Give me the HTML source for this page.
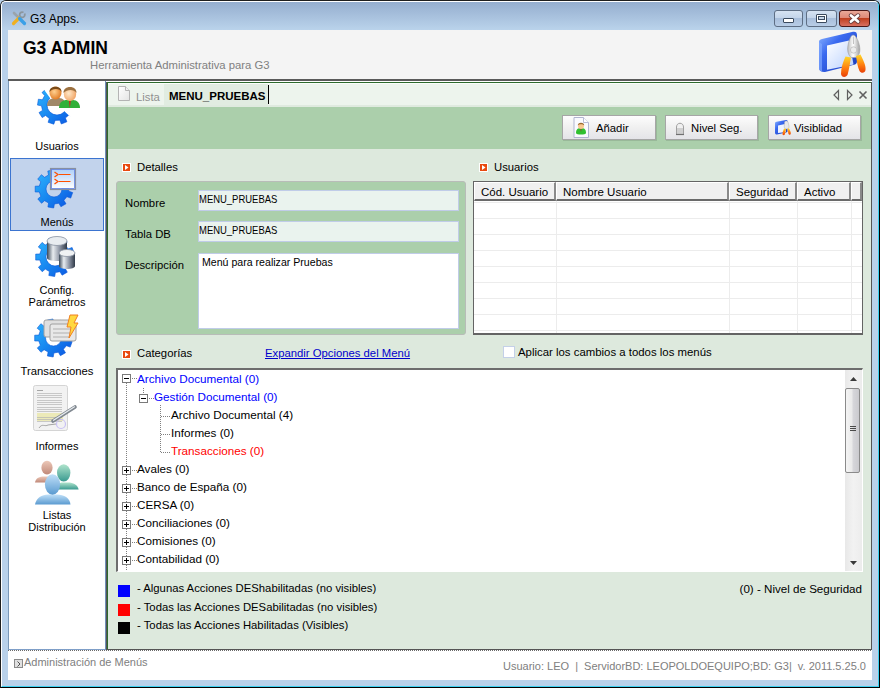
<!DOCTYPE html>
<html><head><meta charset="utf-8">
<style>
*{margin:0;padding:0;box-sizing:border-box}
html,body{width:880px;height:688px;overflow:hidden}
body{position:relative;background:#b9d1ea;font-family:"Liberation Sans",sans-serif;font-size:11px;color:#000}
.a{position:absolute}
.t{position:absolute;white-space:nowrap;line-height:13px;font-size:11.3px}
.sb{font-size:11px}
</style></head><body>
<!-- frame -->
<div class="a" style="left:0;top:0;width:880px;height:688px;border-top:1px solid #1e1e1e;border-left:1px solid #1e1e1e;border-right:1px solid #000;border-bottom:1px solid #000;border-radius:6px 6px 0 0"></div>
<div class="a" style="left:1px;top:1px;width:878px;height:686px;border-top:1px solid #fff;border-left:1px solid #fff;border-right:1px solid #3cd0f0;border-bottom:1px solid #3cd0f0;border-radius:5px 5px 0 0"></div>
<div class="a" style="left:2px;top:2px;width:876px;height:28px;background:linear-gradient(#95aecf,#bad3eb);border-radius:4px 4px 0 0"></div>

<!-- client -->
<div class="a" style="left:8px;top:30px;width:864px;height:650px;background:#fff"></div>
<div class="a" style="left:8px;top:30px;width:864px;height:49px;background:#f4f4f4"></div>
<div class="a" style="left:8px;top:79px;width:864px;height:2px;background:#5a5a5a"></div>


<!-- title -->
<svg class="a" style="left:11px;top:10px" width="16" height="16" viewBox="0 0 16 16">
 <path d="M3 3 L13 13" stroke="#9aa4ac" stroke-width="2.6" stroke-linecap="round"/>
 <path d="M12.5 2.5 a2.6 2.6 0 1 0 1 1" fill="none" stroke="#8c969e" stroke-width="1.8"/>
 <path d="M2.5 13.5 L8 8" stroke="#f0b020" stroke-width="3.2" stroke-linecap="round"/>
 <path d="M8.5 8.5 L13.5 13.5" stroke="#3aa0e8" stroke-width="3.2" stroke-linecap="round"/>
</svg>
<div class="t" style="left:30px;top:13px;font-size:12px;color:#000">G3 Apps.</div>
<div class="a" style="left:774px;top:10px;width:29px;height:17px;border:1px solid #5e6e84;border-radius:3px;background:linear-gradient(#d6e3f2 0,#c4d5ea 45%,#a9bfdc 50%,#b8cde6 100%)"></div>
<div class="a" style="left:783px;top:18px;width:11px;height:5px;border:1px solid #3a4a5e;border-radius:1px;background:#fff"></div>
<div class="a" style="left:806px;top:10px;width:31px;height:17px;border:1px solid #5e6e84;border-radius:3px;background:linear-gradient(#d6e3f2 0,#c4d5ea 45%,#a9bfdc 50%,#b8cde6 100%)"></div>
<div class="a" style="left:816px;top:14px;width:11px;height:9px;border:1px solid #3a4a5e;border-radius:1px;background:#fff"></div>
<div class="a" style="left:818px;top:16px;width:7px;height:4px;border:1px solid #3a4a5e;background:#c8d8ea"></div>
<div class="a" style="left:839px;top:10px;width:31px;height:17px;border:1px solid #4a1818;border-radius:3px;background:linear-gradient(#eaa898 0,#e08a78 45%,#c04020 50%,#d87060 100%)"></div>
<svg class="a" style="left:847px;top:13px" width="15" height="11" viewBox="0 0 15 11">
 <path d="M4 2.5 L11 8.5 M11 2.5 L4 8.5" stroke="#6a4040" stroke-width="4.4" stroke-linecap="round"/>
 <path d="M4 2.5 L11 8.5 M11 2.5 L4 8.5" stroke="#fff" stroke-width="2.8" stroke-linecap="round"/>
</svg>

<!-- header -->
<div class="t" style="left:23px;top:39px;font-size:17.5px;font-weight:bold;line-height:18px">G3 ADMIN</div>
<div class="t" style="left:90px;top:59px;color:#808080">Herramienta Administrativa para G3</div>


<svg class="a" style="left:816px;top:30px" width="56" height="49" viewBox="0 0 56 49">
 <defs>
  <linearGradient id="lw" x1="0" y1="0" x2="1" y2="1"><stop offset="0" stop-color="#90b8ff"/><stop offset="0.35" stop-color="#3a6af0"/><stop offset="1" stop-color="#1838b8"/></linearGradient>
  <linearGradient id="lp" x1="0" y1="0" x2="1" y2="1"><stop offset="0" stop-color="#ffffff"/><stop offset="1" stop-color="#b8d0ff"/></linearGradient>
  <linearGradient id="lh" x1="0" y1="0" x2="0" y2="1"><stop offset="0" stop-color="#ffd828"/><stop offset="0.55" stop-color="#ff8010"/><stop offset="1" stop-color="#e84008"/></linearGradient>
  <linearGradient id="lm" x1="0" y1="0" x2="1" y2="0"><stop offset="0" stop-color="#b8b8b8"/><stop offset="0.45" stop-color="#ffffff"/><stop offset="1" stop-color="#a0a0a0"/></linearGradient>
 </defs>
 <path d="M3 12 C3 10 4 9.5 6 9 L37 1.8 C39.5 1.3 41 2.5 41 5 L41 31 C41 33 40.5 34 38 34.8 L10 41.8 C6 42.5 3 41 3 38 Z" fill="url(#lw)"/>
 <path d="M3 12 L3 38 C3 40 4 41 6 41.5 L6 14 Z" fill="#80a8ff" opacity="0.7"/>
 <path d="M11 15.5 L33 10.5 L37.5 34.5 L11 39.8 Z" fill="url(#lp)"/>
 <path d="M36 5.5 C35 6 33.5 9 32.5 13 C31.5 17 31 21 33 25 L35 27.5 L40.5 27.5 C43.5 25 44.5 21 43.5 16 C42.5 11 40.5 7 38.5 5.5 C37.8 5 36.8 5 36 5.5 Z" fill="url(#lm)" stroke="#a0a0a0" stroke-width="0.6"/>
 <path d="M37.3 6.5 L37.5 14" stroke="#b0b0b0" stroke-width="0.8"/>
 <circle cx="37.6" cy="20" r="3.2" fill="#ececec" stroke="#b8b8b8" stroke-width="0.7"/>
 <path d="M29.5 26.5 L35 27.5 C34 33 33 40 31.5 45 C29.5 48 25.5 47.5 25 44 C25 38 27 32 29.5 26.5 Z" fill="url(#lh)"/>
 <path d="M40 26 L44.5 24.5 C47 30 50 35 49.5 40 C49 43.5 45 43.5 43.5 41 C41.5 37 41 32 40 26 Z" fill="url(#lh)"/>
</svg>

<!-- sidebar -->
<div class="a" style="left:8px;top:81px;width:98px;height:569px;border-left:1px solid #7a98b8;border-right:1px solid #7090b8;border-bottom:1px solid #7f9fc8;background:#fff"></div>


<!-- sidebar items -->
<div class="a" style="left:10px;top:158px;width:94px;height:73px;background:#c2d3ec;border:1px solid #3b74d0"></div>

<svg class="a" style="left:30px;top:84px" width="52" height="46" viewBox="0 0 52 46">
 <defs>
  <linearGradient id="gb" x1="0" y1="0" x2="1" y2="1"><stop offset="0" stop-color="#30b8ff"/><stop offset="0.5" stop-color="#1888f0"/><stop offset="1" stop-color="#0a50e0"/></linearGradient>
  <clipPath id="c1"><path d="M0 0 L10 0 L20 14 L46 38 L46 46 L0 46 Z"/></clipPath>
  <radialGradient id="face" cx="0.4" cy="0.4" r="0.65"><stop offset="0" stop-color="#ffd090"/><stop offset="1" stop-color="#e07820"/></radialGradient>
  <radialGradient id="face2" cx="0.4" cy="0.45" r="0.65"><stop offset="0" stop-color="#ffe8c8"/><stop offset="1" stop-color="#f0a060"/></radialGradient>
 </defs>
 <g clip-path="url(#c1)"><path fill="url(#gb)" stroke="#0a58d8" stroke-width="0.6" fill-rule="evenodd" d="M41.8 25.6 L45.4 27.5 L42.5 32.8 L38.9 30.9 L35.4 34.0 L36.9 37.8 L31.3 40.0 L29.8 36.2 L25.1 36.4 L23.8 40.2 L18.1 38.3 L19.3 34.5 L15.6 31.5 L12.2 33.6 L9.0 28.6 L12.5 26.4 L11.5 21.8 L7.5 21.1 L8.4 15.2 L12.4 15.8 L14.7 11.6 L12.0 8.6 L16.4 4.6 L19.2 7.6 L23.6 5.9 L23.5 1.8 L29.4 1.7 L29.6 5.7 L34.1 7.2 L36.6 4.0 L41.3 7.7 L38.8 11.0 L41.3 15.0 L45.3 14.2 L46.5 20.0 L42.5 20.9 Z M17.0 21.0 a10.0 10.0 0 1 0 20.0 0 a10.0 10.0 0 1 0 -20.0 0 Z"/></g>
 <path d="M17 22 C17 16 21 14 25 14 L29 14 C33 14 36 17 36 22 Z" fill="#a08868"/>
 <ellipse cx="25.5" cy="9" rx="6" ry="6.5" fill="url(#face)"/>
 <path d="M19.5 8 C19 1 32 1 31.5 8 C30 4 22 4 19.5 8 Z" fill="#7a4a18"/>
 <path d="M29 24 C29 18 33 16 37 16 L43 16 C47 16 50 19 50 24 Z" fill="#30b038"/>
 <path d="M39 17 L39.8 24 L40.8 17 Z" fill="#d02020"/>
 <ellipse cx="40" cy="10" rx="6.2" ry="7" fill="url(#face2)"/>
 <path d="M33.5 9 C33 1 47 1 46.5 9 C44 5 37 5 33.5 9 Z" fill="#9a7040"/>
</svg>
<div class="t sb" style="left:0;width:114px;text-align:center;top:140px">Usuarios</div>

<svg class="a" style="left:34px;top:166px" width="48" height="46" viewBox="0 0 48 46">
 <defs><linearGradient id="wg" x1="0" y1="0" x2="0" y2="1"><stop offset="0" stop-color="#b0d0f8"/><stop offset="1" stop-color="#ffffff"/></linearGradient></defs>
 <path fill="url(#gb)" stroke="#0a58d8" stroke-width="0.6" fill-rule="evenodd" d="M34.8 25.2 L38.7 26.6 L36.7 32.1 L32.9 30.7 L29.9 34.3 L32.0 37.8 L26.9 40.7 L24.9 37.2 L20.4 38.0 L19.7 42.0 L13.9 41.0 L14.6 37.0 L10.6 34.7 L7.5 37.3 L3.8 32.9 L6.9 30.3 L5.3 26.0 L1.2 26.0 L1.2 20.2 L5.3 20.1 L6.8 15.8 L3.7 13.2 L7.4 8.7 L10.6 11.3 L14.5 9.0 L13.8 5.0 L19.5 4.0 L20.3 8.0 L24.8 8.8 L26.8 5.3 L31.9 8.1 L29.8 11.7 L32.8 15.2 L36.6 13.8 L38.6 19.2 L34.8 20.7 Z M12.0 23.0 a8.0 8.0 0 1 0 16.0 0 a8.0 8.0 0 1 0 -16.0 0 Z"/>
 <rect x="16.5" y="2.5" width="25" height="21" fill="none" stroke="#8890a0" stroke-width="1.2"/>
 <rect x="17.5" y="3.5" width="23" height="19" fill="url(#wg)" stroke="#6080e0" stroke-width="0.8"/>
 <path d="M20.5 6 L24 8.5 L20.5 11 M20.5 13 L24 15.5 L20.5 18" stroke="#ff5000" stroke-width="1.3" fill="none"/>
 <path d="M25 8.5 L36.5 8.5 M25 15.5 L36.5 15.5" stroke="#ff5000" stroke-width="1.2"/>
</svg>
<div class="t sb" style="left:0;width:114px;text-align:center;top:216px">Menús</div>

<svg class="a" style="left:34px;top:234px" width="48" height="46" viewBox="0 0 48 46">
 <defs><linearGradient id="cyl" x1="0" x2="1"><stop offset="0" stop-color="#3a4858"/><stop offset="0.3" stop-color="#e8ecf0"/><stop offset="0.65" stop-color="#8890a0"/><stop offset="1" stop-color="#303a48"/></linearGradient></defs>
 <path fill="url(#gb)" stroke="#0a58d8" stroke-width="0.6" fill-rule="evenodd" d="M36.3 25.3 L40.1 26.7 L38.1 32.3 L34.3 31.0 L31.3 34.6 L33.3 38.2 L28.1 41.2 L26.0 37.7 L21.4 38.5 L20.7 42.5 L14.8 41.5 L15.4 37.5 L11.3 35.1 L8.2 37.7 L4.4 33.2 L7.4 30.5 L5.8 26.1 L1.7 26.1 L1.7 20.1 L5.8 20.0 L7.4 15.6 L4.3 13.0 L8.1 8.4 L11.2 11.0 L15.3 8.6 L14.6 4.6 L20.5 3.5 L21.3 7.5 L25.9 8.3 L28.0 4.8 L33.2 7.8 L31.2 11.3 L34.2 14.9 L38.1 13.5 L40.1 19.1 L36.3 20.6 Z M12.0 23.0 a9.0 9.0 0 1 0 18.0 0 a9.0 9.0 0 1 0 -18.0 0 Z"/>
 <path d="M13 7 L13 24 C13 28 33 28 33 24 L33 7 Z" fill="url(#cyl)"/>
 <ellipse cx="23" cy="7" rx="10" ry="4.5" fill="#e8ecf0" stroke="#8890a0" stroke-width="0.8"/>
 <path d="M25 19 L25 32 C25 36 41 36 41 32 L41 19 Z" fill="url(#cyl)"/>
 <ellipse cx="33" cy="19" rx="8" ry="3.5" fill="#f0f2f4" stroke="#8890a0" stroke-width="0.8"/>
</svg>
<div class="t sb" style="left:0;width:114px;text-align:center;top:284px">Config.</div>
<div class="t sb" style="left:0;width:114px;text-align:center;top:296px">Parámetros</div>

<svg class="a" style="left:34px;top:314px" width="48" height="46" viewBox="0 0 48 46">
 <path fill="url(#gb)" stroke="#0a58d8" stroke-width="0.6" fill-rule="evenodd" d="M34.3 26.2 L38.2 27.6 L36.2 33.1 L32.4 31.7 L29.4 35.3 L31.5 38.8 L26.4 41.7 L24.4 38.2 L19.9 39.0 L19.2 43.0 L13.4 42.0 L14.1 38.0 L10.1 35.7 L7.0 38.3 L3.3 33.9 L6.4 31.3 L4.8 27.0 L0.7 27.0 L0.7 21.2 L4.8 21.1 L6.3 16.8 L3.2 14.2 L6.9 9.7 L10.1 12.3 L14.0 10.0 L13.3 6.0 L19.0 5.0 L19.8 9.0 L24.3 9.8 L26.3 6.3 L31.4 9.1 L29.3 12.7 L32.3 16.2 L36.1 14.8 L38.1 20.2 L34.3 21.7 Z M11.5 24.0 a8.0 8.0 0 1 0 16.0 0 a8.0 8.0 0 1 0 -16.0 0 Z"/>
 <rect x="10" y="6" width="26" height="17" rx="2" fill="#e0e0e0" stroke="#a0a0a0" stroke-width="1"/>
 <rect x="16" y="10" width="26" height="17" rx="2" fill="#e8e8e8" stroke="#a0a0a0" stroke-width="1"/>
 <path d="M19 15 L36 15 M19 19 L36 19 M19 23 L36 23" stroke="#b0b0b0" stroke-width="1.2"/>
 <path d="M36 1 L44 1 L40 9 L44 9 L35 24 L37 13 L33 13 Z" fill="#ffd840" stroke="#f08020" stroke-width="1"/>
</svg>
<div class="t" style="left:0;width:114px;text-align:center;top:365px;font-size:11.3px">Transacciones</div>

<svg class="a" style="left:32px;top:384px" width="48" height="50" viewBox="0 0 48 50">
 <rect x="1.5" y="1.5" width="34" height="45" rx="2" fill="#f2f2f2" stroke="#d4d4d4"/>
 <rect x="5" y="29" width="26" height="8" fill="#eceab8"/>
 <path d="M5 6.5 L11 6.5" stroke="#909090" stroke-width="0.8"/>
 <path d="M5 9.5 L30 9.5 M5 11.5 L30 11.5 M5 13.5 L30 13.5 M5 16.5 L30 16.5 M5 18.5 L30 18.5 M5 20.5 L30 20.5 M5 23.5 L30 23.5 M5 25.5 L30 25.5 M5 27.5 L30 27.5 M5 33.5 L30 33.5 M5 35.5 L30 35.5 M5 37.5 L30 37.5" stroke="#b4b4b4" stroke-width="0.7"/>
 <circle cx="29" cy="40" r="4.5" fill="none" stroke="#c8c0f4" stroke-width="1.2"/>
 <path d="M7 44 C10 39 13 43 16 41 L24 40" stroke="#909090" stroke-width="0.8" fill="none"/>
 <path d="M21 37 L43 23" stroke="#808890" stroke-width="3.6" stroke-linecap="round"/>
 <path d="M21.5 36.3 L42.5 22.8" stroke="#e8ecf0" stroke-width="1.2" stroke-linecap="round"/>
</svg>
<div class="t sb" style="left:0;width:114px;text-align:center;top:440px">Informes</div>

<svg class="a" style="left:34px;top:459px" width="48" height="48" viewBox="0 0 48 48">
 <defs>
  <linearGradient id="pp" x1="0" y1="0" x2="0" y2="1"><stop offset="0" stop-color="#ecc8b8"/><stop offset="1" stop-color="#c08878"/></linearGradient>
  <linearGradient id="pt" x1="0" y1="0" x2="0" y2="1"><stop offset="0" stop-color="#b0e4cc"/><stop offset="1" stop-color="#3a9a90"/></linearGradient>
  <linearGradient id="pbl" x1="0" y1="0" x2="0" y2="1"><stop offset="0" stop-color="#c0e0f8"/><stop offset="1" stop-color="#5a9ad0"/></linearGradient>
 </defs>
 <path d="M1 23.5 C1.5 19 6 17.5 10 17.5 L15 17.5 C19 17.5 21 19 21 23.5 Z" fill="url(#pp)"/>
 <ellipse cx="13" cy="8.7" rx="5.6" ry="6.9" fill="url(#pp)"/>
 <path d="M21 30.5 C21.5 26 25 23.5 29 23.5 L34 23.5 C39 23.5 44 26 44.6 30.5 Z" fill="url(#pt)"/>
 <ellipse cx="29.7" cy="13.8" rx="6.7" ry="8.6" fill="url(#pt)"/>
 <path d="M1 45.5 C2 39 8 35.5 14 35.5 L23 35.5 C30 35.5 36 39 36.5 45.5 Z" fill="url(#pbl)"/>
 <ellipse cx="18.5" cy="25.5" rx="7.6" ry="10.2" fill="url(#pbl)"/>
</svg>
<div class="t sb" style="left:0;width:114px;text-align:center;top:509px">Listas</div>
<div class="t sb" style="left:0;width:114px;text-align:center;top:521px">Distribución</div>

<!-- main panel -->
<div class="a" style="left:106px;top:82px;width:766px;height:568px;background:#dde9dd;border-left:1px solid #555;border-bottom:1px solid #555;border-right:1px solid #555"></div>
<div class="a" style="left:107px;top:82px;width:764px;height:567px;border-left:1px solid #2d6a2d;border-top:1px solid #2d6a2d"></div>
<div class="a" style="left:108px;top:83px;width:763px;height:24px;background:#edf4ed;border-top:1px solid #fafdfa"></div>
<div class="a" style="left:108px;top:107px;width:763px;height:42px;background:#abcfab"></div>


<!-- tab header -->
<div class="a" style="left:108px;top:105px;width:763px;height:2px;background:#dfeadf"></div>
<div class="a" style="left:164px;top:84px;width:104px;height:21px;background:#e1ece1"></div>
<div class="a" style="left:268px;top:85px;width:1px;height:19px;background:#000"></div>
<svg class="a" style="left:117px;top:85px" width="14" height="17" viewBox="0 0 14 17">
 <defs><linearGradient id="dg" x1="0" y1="0" x2="1" y2="1"><stop offset="0" stop-color="#ffffff"/><stop offset="1" stop-color="#e4e4e4"/></linearGradient></defs>
 <path d="M1.5 1.5 L8.5 1.5 L12.5 5.5 L12.5 15.5 L1.5 15.5 Z" fill="url(#dg)" stroke="#b4b4b4"/>
 <path d="M8.5 1.5 L8.5 5.5 L12.5 5.5" fill="#f0f0f0" stroke="#b4b4b4"/>
</svg>
<div class="t" style="left:136px;top:91px;color:#909090">Lista</div>
<div class="t" style="left:169px;top:90px;font-weight:bold;font-size:11.5px">MENU_PRUEBAS</div>
<svg class="a" style="left:832px;top:89px" width="38" height="12" viewBox="0 0 38 12">
 <path d="M6.5 1.5 L6.5 10.5 L2 6 Z" fill="none" stroke="#606060" stroke-width="1.2"/>
 <path d="M15.5 1.5 L15.5 10.5 L20 6 Z" fill="none" stroke="#606060" stroke-width="1.2"/>
 <path d="M27.5 2.5 L34.5 9.5 M34.5 2.5 L27.5 9.5" stroke="#606060" stroke-width="1.6"/>
</svg>

<!-- toolbar buttons -->
<div class="a" style="left:563px;top:116px;width:94px;height:25px;background:#8aa88a;opacity:.55"></div>
<div class="a" style="left:562px;top:115px;width:94px;height:25px;border:1px solid #a6a6a6;background:linear-gradient(#fdfdfd,#f0f0f0 50%,#e4e4e8)"></div>
<div class="a" style="left:666px;top:116px;width:93px;height:25px;background:#8aa88a;opacity:.55"></div>
<div class="a" style="left:665px;top:115px;width:93px;height:25px;border:1px solid #a6a6a6;background:linear-gradient(#fdfdfd,#f0f0f0 50%,#e4e4e8)"></div>
<div class="a" style="left:769px;top:116px;width:93px;height:25px;background:#8aa88a;opacity:.55"></div>
<div class="a" style="left:768px;top:115px;width:93px;height:25px;border:1px solid #a6a6a6;background:linear-gradient(#fdfdfd,#f0f0f0 50%,#e4e4e8)"></div>

<svg class="a" style="left:573px;top:117px" width="17" height="22" viewBox="0 0 17 22">
 <path d="M1 0.5 L10.5 0.5 L15.5 5.5 L15.5 20.5 L1 20.5 Z" fill="#fafafe" stroke="#b0b4d0"/>
 <path d="M10.5 0.5 L10.5 5.5 L15.5 5.5" fill="#fff" stroke="#b8bcd8"/>
 <path d="M3 16 C3 12 5 11 8 11 C11 11 13 12 13 16 C13 18 3 18 3 16 Z" fill="#30c030"/>
 <path d="M7.3 11 L8 15 L8.7 11 Z" fill="#a03030"/>
 <circle cx="8" cy="9" r="3" fill="#f8c890"/>
 <path d="M4.8 8.5 C4.5 4.8 11.5 4.8 11.2 8.5 C10 6.8 6 6.8 4.8 8.5 Z" fill="#9a6a30"/>
</svg>
<div class="t" style="left:596px;top:122px">Añadir</div>

<svg class="a" style="left:675px;top:120px" width="10" height="16" viewBox="0 0 10 16">
 <path d="M1.5 7 C1.5 2 8.5 2 8.5 7 L8.5 14.5 L1.5 14.5 Z" fill="#f0f0f0" stroke="#a0a0a0"/>
 <rect x="2" y="8" width="6" height="6" fill="#d0d0d0"/>
 <path d="M1 14.5 L9 14.5" stroke="#707070" stroke-width="1.2"/>
</svg>
<div class="t" style="left:691px;top:122px">Nivel Seg.</div>

<svg class="a" style="left:774px;top:119px" width="18" height="17" viewBox="0 0 18 17">
 <path d="M1 4.5 C1 3.5 1.5 3 2.5 2.8 L12 1 C13 0.8 13.5 1.3 13.5 2.3 L13.5 12 C13.5 13 13 13.3 12 13.5 L3 15.5 C2 15.7 1 15 1 14 Z" fill="url(#lw)"/>
 <path d="M4 6.5 L11 5 L12 13 L4 14 Z" fill="#eef4ff"/>
 <path d="M10.5 3 C11 1.5 13.5 1.5 14 3 L15 7 C15.3 8.5 14.5 10 13 10 L11.5 10 C10.5 9.5 10 8 10.3 7 Z" fill="#e8e8e8" stroke="#a0a0a0" stroke-width="0.4"/>
 <path d="M10 9.5 L12 10 C11.7 12 11.3 14 10.8 15.5 C10 16.5 8.5 16.3 8.5 15 C8.5 13 9.3 11.5 10 9.5 Z" fill="url(#lh)"/>
 <path d="M13.5 9.8 L15 9.3 C16 11.5 17 13 16.8 14.8 C16.5 16 15 16 14.5 15 C14 13.5 13.8 12 13.5 9.8 Z" fill="url(#lh)"/>
</svg>
<div class="t" style="left:794px;top:122px">Visiblidad</div>


<!-- section icons -->
<svg class="a" style="left:122px;top:163px" width="9" height="9" viewBox="0 0 9 9"><rect x="0" y="0" width="9" height="9" fill="#fff"/><rect x="1" y="1" width="7" height="7" fill="#e84a10"/><path d="M3 2 L6.5 4.5 L3 7 Z" fill="#fff"/></svg>
<div class="t" style="left:137px;top:161px">Detalles</div>
<svg class="a" style="left:479px;top:163px" width="9" height="9" viewBox="0 0 9 9"><rect x="0" y="0" width="9" height="9" fill="#fff"/><rect x="1" y="1" width="7" height="7" fill="#e84a10"/><path d="M3 2 L6.5 4.5 L3 7 Z" fill="#fff"/></svg>
<div class="t" style="left:494px;top:161px">Usuarios</div>

<!-- detalles group -->
<div class="a" style="left:116px;top:181px;width:350px;height:154px;background:#abcfab;border:1px solid #b8bcb8;border-radius:3px"></div>
<div class="t" style="left:125px;top:197px">Nombre</div>
<div class="t" style="left:125px;top:228px">Tabla DB</div>
<div class="t" style="left:125px;top:259px">Descripción</div>
<div class="a" style="left:198px;top:190px;width:261px;height:21px;background:#eaf3ee;border:1px solid #c0cce8"></div>
<div class="a" style="left:198px;top:221px;width:261px;height:21px;background:#eaf3ee;border:1px solid #c0cce8"></div>
<div class="a" style="left:198px;top:253px;width:261px;height:76px;background:#fff;border:1px solid #c0cce8"></div>
<div class="t" style="left:199px;top:193px;font-size:11px;transform:scaleX(.86);transform-origin:0 0">MENU_PRUEBAS</div>
<div class="t" style="left:199px;top:224px;font-size:11px;transform:scaleX(.86);transform-origin:0 0">MENU_PRUEBAS</div>
<div class="t" style="left:202px;top:256px;font-size:10.6px">Menú para realizar Pruebas</div>

<!-- usuarios grid -->
<div class="a" style="left:473px;top:181px;width:390px;height:154px;background:#fff;border:1px solid #646464;border-bottom:2px solid #646464"></div>
<div class="a" style="left:474px;top:182px;width:388px;height:19px;background:#f0f0f0;border-bottom:2px solid #7a7a7a"></div>
<div class="a" style="left:474px;top:182px;width:82px;height:19px;border-top:1px solid #fff;border-left:1px solid #fff;border-right:2px solid #8a8a8a;border-bottom:2px solid #6a6a6a"></div>
<div class="t" style="left:481px;top:186px;font-size:11.5px">Cód. Usuario</div>
<div class="a" style="left:556px;top:182px;width:173px;height:19px;border-top:1px solid #fff;border-left:1px solid #fff;border-right:2px solid #8a8a8a;border-bottom:2px solid #6a6a6a"></div>
<div class="t" style="left:563px;top:186px;font-size:11.5px">Nombre Usuario</div>
<div class="a" style="left:729px;top:182px;width:68px;height:19px;border-top:1px solid #fff;border-left:1px solid #fff;border-right:2px solid #8a8a8a;border-bottom:2px solid #6a6a6a"></div>
<div class="t" style="left:736px;top:186px;font-size:11.5px">Seguridad</div>
<div class="a" style="left:797px;top:182px;width:54px;height:19px;border-top:1px solid #fff;border-left:1px solid #fff;border-right:2px solid #8a8a8a;border-bottom:2px solid #6a6a6a"></div>
<div class="t" style="left:804px;top:186px;font-size:11.5px">Activo</div>
<div class="a" style="left:851px;top:182px;width:11px;height:19px;border-top:1px solid #fff;border-left:1px solid #fff;border-right:2px solid #8a8a8a;border-bottom:2px solid #6a6a6a"></div>
<div class="a" style="left:474px;top:202px;width:388px;height:1px;background:#ececec"></div>
<div class="a" style="left:474px;top:218px;width:388px;height:1px;background:#ececec"></div>
<div class="a" style="left:474px;top:234px;width:388px;height:1px;background:#ececec"></div>
<div class="a" style="left:474px;top:250px;width:388px;height:1px;background:#ececec"></div>
<div class="a" style="left:474px;top:266px;width:388px;height:1px;background:#ececec"></div>
<div class="a" style="left:474px;top:282px;width:388px;height:1px;background:#ececec"></div>
<div class="a" style="left:474px;top:298px;width:388px;height:1px;background:#ececec"></div>
<div class="a" style="left:474px;top:314px;width:388px;height:1px;background:#ececec"></div>
<div class="a" style="left:474px;top:330px;width:388px;height:1px;background:#ececec"></div>
<div class="a" style="left:556px;top:201px;width:1px;height:132px;background:#ececec"></div>
<div class="a" style="left:729px;top:201px;width:1px;height:132px;background:#ececec"></div>
<div class="a" style="left:797px;top:201px;width:1px;height:132px;background:#ececec"></div>
<div class="a" style="left:851px;top:201px;width:1px;height:132px;background:#ececec"></div>



<!-- categorias -->
<svg class="a" style="left:122px;top:350px" width="9" height="9" viewBox="0 0 9 9"><rect x="0" y="0" width="9" height="9" fill="#fff"/><rect x="1" y="1" width="7" height="7" fill="#e84a10"/><path d="M3 2 L6.5 4.5 L3 7 Z" fill="#fff"/></svg>
<div class="t" style="left:137px;top:347px">Categorías</div>
<div class="t" style="left:265px;top:347px;font-size:11.3px;color:#0000cc;text-decoration:underline">Expandir Opciones del Menú</div>
<div class="a" style="left:503px;top:346px;width:12px;height:12px;border:1px solid #c4d0e8;background:#fff"></div>
<div class="t" style="left:518px;top:346px;font-size:11.4px">Aplicar los cambios a todos los menús</div>

<!-- tree -->
<div class="a" style="left:116px;top:368px;width:747px;height:204px;background:#fff;border-top:2px solid #6d6d6d;border-left:2px solid #6d6d6d;border-right:1px solid #fff;border-bottom:1px solid #fff"></div>
<div class="a" style="left:845px;top:370px;width:17px;height:201px;background:linear-gradient(90deg,#e8e8e8,#f2f2f2 50%,#ececec)"></div>
<div class="a" style="left:845px;top:388px;width:15px;height:85px;border:1px solid #8a8a8a;border-radius:2px;background:linear-gradient(90deg,#f4f4f4,#eaeaea 45%,#d6d6da 55%,#cacace)"></div>
<svg class="a" style="left:849px;top:425px" width="8" height="8" viewBox="0 0 8 8"><path d="M1 1.5 L7 1.5 M1 3.5 L7 3.5 M1 5.5 L7 5.5" stroke="#4a4a4a" stroke-width="1"/></svg>
<svg class="a" style="left:850px;top:377px" width="7" height="4" viewBox="0 0 7 4"><path d="M0 4 L3.5 0 L7 4 Z" fill="#3a3a3a"/></svg>
<svg class="a" style="left:850px;top:561px" width="7" height="4" viewBox="0 0 7 4"><path d="M0 0 L3.5 4 L7 0 Z" fill="#3a3a3a"/></svg>
<div class="a" style="left:126px;top:383px;width:1px;height:187px;background:repeating-linear-gradient(180deg,#808080 0 1px,transparent 1px 2px)"></div>
<div class="a" style="left:143px;top:388px;width:1px;height:6px;background:repeating-linear-gradient(180deg,#808080 0 1px,transparent 1px 2px)"></div>
<div class="a" style="left:160px;top:405px;width:1px;height:48px;background:repeating-linear-gradient(180deg,#808080 0 1px,transparent 1px 2px)"></div>
<div class="a" style="left:122px;top:374px;width:9px;height:9px;border:1px solid #7a7a7a;background:#fff"></div>
<div class="a" style="left:124px;top:378px;width:5px;height:1px;background:#000"></div>
<div class="a" style="left:132px;top:378px;width:5px;height:1px;background:repeating-linear-gradient(90deg,#808080 0 1px,transparent 1px 2px)"></div>
<div class="t" style="left:137px;top:372px;font-size:11.7px;color:#0000ff">Archivo Documental (0)</div>
<div class="a" style="left:139px;top:394px;width:9px;height:9px;border:1px solid #7a7a7a;background:#fff"></div>
<div class="a" style="left:141px;top:398px;width:5px;height:1px;background:#000"></div>
<div class="a" style="left:149px;top:398px;width:5px;height:1px;background:repeating-linear-gradient(90deg,#808080 0 1px,transparent 1px 2px)"></div>
<div class="t" style="left:154px;top:390px;font-size:11.7px;color:#0000ff">Gestión Documental (0)</div>
<div class="a" style="left:161px;top:416px;width:10px;height:1px;background:repeating-linear-gradient(90deg,#808080 0 1px,transparent 1px 2px)"></div>
<div class="t" style="left:171px;top:408px;font-size:11.7px;color:#000">Archivo Documental (4)</div>
<div class="a" style="left:161px;top:434px;width:10px;height:1px;background:repeating-linear-gradient(90deg,#808080 0 1px,transparent 1px 2px)"></div>
<div class="t" style="left:171px;top:426px;font-size:11.7px;color:#000">Informes (0)</div>
<div class="a" style="left:161px;top:452px;width:10px;height:1px;background:repeating-linear-gradient(90deg,#808080 0 1px,transparent 1px 2px)"></div>
<div class="t" style="left:171px;top:444px;font-size:11.7px;color:#ff0000">Transacciones (0)</div>
<div class="a" style="left:122px;top:466px;width:9px;height:9px;border:1px solid #7a7a7a;background:#fff"></div>
<div class="a" style="left:124px;top:470px;width:5px;height:1px;background:#000"></div>
<div class="a" style="left:126px;top:468px;width:1px;height:5px;background:#000"></div>
<div class="a" style="left:132px;top:470px;width:5px;height:1px;background:repeating-linear-gradient(90deg,#808080 0 1px,transparent 1px 2px)"></div>
<div class="t" style="left:137px;top:462px;font-size:11.7px;color:#000">Avales (0)</div>
<div class="a" style="left:122px;top:484px;width:9px;height:9px;border:1px solid #7a7a7a;background:#fff"></div>
<div class="a" style="left:124px;top:488px;width:5px;height:1px;background:#000"></div>
<div class="a" style="left:126px;top:486px;width:1px;height:5px;background:#000"></div>
<div class="a" style="left:132px;top:488px;width:5px;height:1px;background:repeating-linear-gradient(90deg,#808080 0 1px,transparent 1px 2px)"></div>
<div class="t" style="left:137px;top:480px;font-size:11.7px;color:#000">Banco de España (0)</div>
<div class="a" style="left:122px;top:502px;width:9px;height:9px;border:1px solid #7a7a7a;background:#fff"></div>
<div class="a" style="left:124px;top:506px;width:5px;height:1px;background:#000"></div>
<div class="a" style="left:126px;top:504px;width:1px;height:5px;background:#000"></div>
<div class="a" style="left:132px;top:506px;width:5px;height:1px;background:repeating-linear-gradient(90deg,#808080 0 1px,transparent 1px 2px)"></div>
<div class="t" style="left:137px;top:498px;font-size:11.7px;color:#000">CERSA (0)</div>
<div class="a" style="left:122px;top:520px;width:9px;height:9px;border:1px solid #7a7a7a;background:#fff"></div>
<div class="a" style="left:124px;top:524px;width:5px;height:1px;background:#000"></div>
<div class="a" style="left:126px;top:522px;width:1px;height:5px;background:#000"></div>
<div class="a" style="left:132px;top:524px;width:5px;height:1px;background:repeating-linear-gradient(90deg,#808080 0 1px,transparent 1px 2px)"></div>
<div class="t" style="left:137px;top:516px;font-size:11.7px;color:#000">Conciliaciones (0)</div>
<div class="a" style="left:122px;top:538px;width:9px;height:9px;border:1px solid #7a7a7a;background:#fff"></div>
<div class="a" style="left:124px;top:542px;width:5px;height:1px;background:#000"></div>
<div class="a" style="left:126px;top:540px;width:1px;height:5px;background:#000"></div>
<div class="a" style="left:132px;top:542px;width:5px;height:1px;background:repeating-linear-gradient(90deg,#808080 0 1px,transparent 1px 2px)"></div>
<div class="t" style="left:137px;top:534px;font-size:11.7px;color:#000">Comisiones (0)</div>
<div class="a" style="left:122px;top:556px;width:9px;height:9px;border:1px solid #7a7a7a;background:#fff"></div>
<div class="a" style="left:124px;top:560px;width:5px;height:1px;background:#000"></div>
<div class="a" style="left:126px;top:558px;width:1px;height:5px;background:#000"></div>
<div class="a" style="left:132px;top:560px;width:5px;height:1px;background:repeating-linear-gradient(90deg,#808080 0 1px,transparent 1px 2px)"></div>
<div class="t" style="left:137px;top:552px;font-size:11.7px;color:#000">Contabilidad (0)</div>

<!-- legend -->
<div class="a" style="left:118px;top:585px;width:12px;height:12px;background:#0000ff"></div>
<div class="a" style="left:118px;top:604px;width:12px;height:12px;background:#ff0000"></div>
<div class="a" style="left:118px;top:622px;width:12px;height:12px;background:#000"></div>
<div class="t" style="left:137px;top:582px;font-size:11.3px">- Algunas Acciones DEShabilitadas (no visibles)</div>
<div class="t" style="left:137px;top:601px;font-size:11.3px">- Todas las Acciones DESabilitadas (no visibles)</div>
<div class="t" style="left:137px;top:619px;font-size:11.3px">- Todas las Acciones Habilitadas (Visibles)</div>
<div class="t" style="right:18px;top:582px;font-size:11.6px">(0) - Nivel de Seguridad</div>

<!-- status bar -->
<div class="a" style="left:14px;top:659px;width:9px;height:9px;border:1px solid #8a8a8a;background:#e0e0e0"></div>
<svg class="a" style="left:16px;top:661px" width="6" height="6" viewBox="0 0 6 6"><path d="M1.5 0.5 L4 3 L1.5 5.5" stroke="#505050" fill="none"/></svg>
<div class="t" style="left:24px;top:656px;color:#808080;font-size:11px">Administración de Menús</div>
<div class="t" style="left:503px;top:660px;color:#808080;white-space:pre;font-size:11px">Usuario: LEO  |  ServidorBD: LEOPOLDOEQUIPO;BD: G3|  v. 2011.5.25.0</div>

<div class="a" style="left:8px;top:650px;width:864px;height:1px;background:repeating-linear-gradient(90deg,#6a6a6a 0 1px,#fff 1px 2px)"></div>

</body></html>
